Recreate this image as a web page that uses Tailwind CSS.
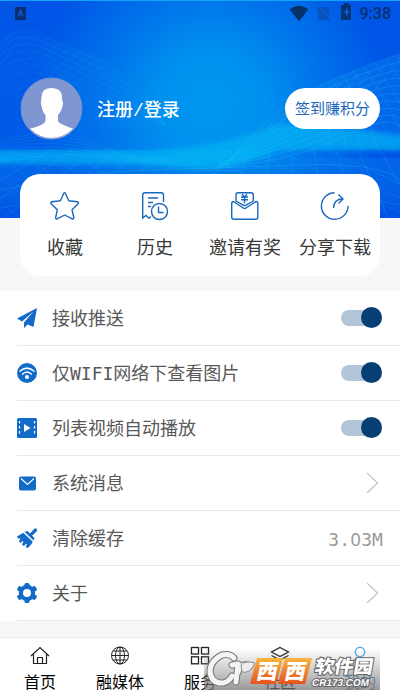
<!DOCTYPE html>
<html lang="zh-CN">
<head>
<meta charset="utf-8">
<title>我的</title>
<script src="https://cdn.jsdelivr.net/npm/@tailwindcss/browser@4"></script>
</head>
<body class="w-[400px] h-[700px] overflow-hidden bg-[#f7f7f7] font-['Liberation_Mono','Noto_Sans_CJK_SC',monospace]">
<div class="relative flex flex-col w-[400px] h-[700px]">
  <!-- header backdrop -->
  <svg class="absolute left-0 top-0" width="400" height="218" viewBox="0 0 400 218">
    <defs>
      <radialGradient id="bg" gradientUnits="userSpaceOnUse" cx="211" cy="104" r="178">
        <stop offset="0" stop-color="#0098ee"/><stop offset=".3" stop-color="#0090ee"/><stop offset=".65" stop-color="#0070ea"/><stop offset="1" stop-color="#0055e6"/>
      </radialGradient>
      <linearGradient id="low" x1="0" x2="0" y1="0" y2="1">
        <stop offset="0" stop-color="#0a85ee" stop-opacity=".3"/><stop offset="1" stop-color="#004fe2" stop-opacity=".8"/>
      </linearGradient>
      <filter id="soft"><feGaussianBlur stdDeviation="2.5"/></filter>
    </defs>
    <rect width="400" height="218" fill="url(#bg)"/>
    <path d="M0 42Q20 22 48 38L100 60Q140 82 165 125L190 155H0Z" fill="#0a88f0" opacity=".12"/>
    <path d="M260 142Q285 105 325 83Q365 66 400 54V150H230Z" fill="#0a98f0" opacity=".28"/>
    <rect y="158" width="400" height="60" fill="url(#low)"/>
    <path filter="url(#soft)" d="M-5 151H150L215 143Q260 134 275 124Q330 126 405 136V150H280Q230 172 180 168T80 164T-5 164Z" fill="#00b4f4" opacity=".65"/>
    <path d="M0 150H270L235 166Q180 170 120 160Q50 152 0 164Z" fill="#00c0f8" opacity=".2"/>
    <g id="mesh" fill="none" stroke="#25c8fa" stroke-width=".8"></g>
    <rect width="400" height="1" fill="#12a4f5"/>
  </svg>

  <!-- status bar -->
  <div class="relative flex h-[27px] items-center pl-[15px] pr-[9px]">
    <svg width="12" height="13" viewBox="0 0 12 13"><rect width="11" height="13" rx="1" fill="#0a2e70"/><path d="M3 9.5L5.5 3L8 9.5M4 7.5H7" fill="none" stroke="#0b58d2" stroke-width="1.3"/></svg>
    <svg class="ml-[262px]" width="20" height="17" viewBox="0 0 20 17"><path d="M.5 4.3Q10-2.800 19.500 4.300L10 16.300Z" fill="#063068"/></svg>
    <svg class="ml-[7px]" width="16" height="17" viewBox="0 0 16 17"><path d="M6 2H13V15H2V6Z" fill="#0b53bd"/><path d="M1 1L14 16" stroke="#0662d8" stroke-width="2.5"/><path d="M.5 2L13.500 16" stroke="#0a48a5" stroke-width="1.100"/></svg>
    <svg class="ml-[9px] -mt-1" width="11" height="17" viewBox="0 0 11 17"><path d="M0 2H3V0H8V2H11V17H0Z" fill="#083273"/><path d="M6.500 4L3 9.500H5V14L8.500 8H6.300Z" fill="#0b60dc"/></svg>
    <span class="ml-[8px] font-['Roboto',sans-serif] text-[16px] leading-4 font-medium text-[#07306f]">9:38</span>
  </div>

  <!-- profile -->
  <div class="relative flex h-[147px] pl-[20px] pr-[20px]">
    <svg class="mt-[50px]" width="63" height="63" viewBox="0 0 63 63">
      <defs><clipPath id="av"><circle cx="31.5" cy="31.5" r="29.5"/></clipPath></defs>
      <circle cx="31.5" cy="31.5" r="30.5" fill="#7f96d0" stroke="#6c94d8"/>
      <g clip-path="url(#av)" fill="#fff"><path d="M21.500 23Q20 11 32 11Q43 11 42 23Q44 25 42 31Q40.500 36 38 38V44Q39 47 54 52V63H9V52Q25 48 25.500 44V38Q23 36 22 31Q20 25 21.500 23Z"/></g>
      <path d="M10 53Q31 69 53 53Q45 62 31.500 62T10 53Z" fill="#9aa6cf"/>
    </svg>
    <div class="ml-[14px] mt-[72px] text-[18px] leading-6 font-medium text-white">注册/登录</div>
    <div class="ml-auto mt-[61px] flex h-[41px] w-[95px] items-center justify-center rounded-full bg-white pt-[3px] text-[15px] leading-none text-[#1766bd]">签到赚积分</div>
  </div>

  <!-- shortcuts -->
  <div class="relative mx-[20px] grid h-[102px] grid-cols-4 rounded-[20px] bg-white text-[18px] leading-6 text-[#383838]">
    <div class="flex flex-col items-center pt-[17px]">
      <svg width="30" height="30" viewBox="0 0 30 30" fill="none" stroke="#1768bc" stroke-width="1.4" stroke-linejoin="round"><path d="M13.700 2.500Q14.600 .8 15.500 2.500L18.800 9.800L27.200 10.800Q29.300 11.300 28 12.900L22 18.700L23.800 26.500Q23.900 28.400 22.200 27.800L14.700 24L7.200 27.800Q5.500 28.400 5.700 26.500L7.300 18.700L1.300 12.900Q0 11.300 2 10.800L10.400 9.800Z"/></svg>
      <span class="mt-[16px] whitespace-nowrap">收藏</span>
    </div>
    <div class="flex flex-col items-center pt-[17px]">
      <svg width="30" height="30" viewBox="0 0 30 30" fill="none" stroke="#1768bc" stroke-width="1.4"><path d="M23.500 11V4Q23.500 1.700 21.200 1.700H5Q2.700 1.700 2.700 4V27L6 24.500L9 27.200L11 25.500M8 7H18M8 11.500H13M8 15.500H11"/><circle cx="19.500" cy="20.500" r="8"/><path d="M18.500 15.500V21.500H23.500"/></svg>
      <span class="mt-[16px] whitespace-nowrap">历史</span>
    </div>
    <div class="flex flex-col items-center pt-[17px]">
      <svg width="30" height="30" viewBox="0 0 30 30" fill="none" stroke="#1768bc" stroke-width="1.4" stroke-linejoin="round"><path d="M6 10V4Q6 1.700 8 1.700H21Q23.300 1.700 23.300 4V10L16 14.200Q14.700 15 13.300 14.200ZM3.500 10.500Q1.700 10.500 1.700 12.500V26Q1.700 28.300 4 28.300H25.500Q27.800 28.300 27.800 26V12.500Q27.800 10.500 26 10.500L16 17Q14.700 18 13.300 17Z"/><path d="M12 3.300L14.500 6L17 3.300M11 6H18M11 8.700H18M14.500 5.500V12.300"/></svg>
      <span class="mt-[16px] whitespace-nowrap">邀请有奖</span>
    </div>
    <div class="flex flex-col items-center pt-[17px]">
      <svg width="30" height="30" viewBox="0 0 30 30" fill="none" stroke="#1768bc" stroke-width="1.4"><path d="M14.500 1.700A13.300 13.300 0 1 0 28 15M13.500 17Q14 8 22.500 8M18.500 3.500L23 8L18.500 12.500"/></svg>
      <span class="mt-[16px] whitespace-nowrap">分享下载</span>
    </div>
  </div>

  <!-- settings -->
  <div class="mt-[15px] flex flex-col bg-white pl-[17px] text-[18px] leading-6 text-[#585858]">
    <div class="flex h-[55px] items-center border-b border-[#e9e9e9] pr-[18px]">
      <svg width="20" height="20" viewBox="0 0 20 20" fill="#136bc9"><path d="M20 0L0 10.500L5 13.500L16.500 3.500L7 14.500V20L10.500 16.500L16.500 19Z"/></svg>
      <span class="ml-[15px] pt-[4px]">接收推送</span>
      <span class="ml-auto flex h-[16px] w-[41px] items-center justify-end rounded-full bg-[#b2c5d7]"><i class="-mt-[1px] size-[21px] shrink-0 rounded-full bg-[#073f75]"></i></span>
    </div>
    <div class="flex h-[55px] items-center border-b border-[#e9e9e9] pr-[18px]">
      <svg width="20" height="20" viewBox="0 0 20 20"><circle cx="10" cy="10" r="10" fill="#136bc9"/><g fill="none" stroke="#fff" stroke-width="1.5"><path d="M2.500 8.500Q10 1.800 17.500 8.500M5.200 11.500Q10 6.700 14.800 11.500"/></g><circle cx="10" cy="14" r="2" fill="#fff"/></svg>
      <span class="ml-[15px] pt-[4px]">仅<span class="font-['DejaVu_Sans_Mono',monospace] leading-none">WIFI</span>网络下查看图片</span>
      <span class="ml-auto flex h-[16px] w-[41px] items-center justify-end rounded-full bg-[#b2c5d7]"><i class="-mt-[1px] size-[21px] shrink-0 rounded-full bg-[#073f75]"></i></span>
    </div>
    <div class="flex h-[55px] items-center border-b border-[#e9e9e9] pr-[18px]">
      <svg width="20" height="20" viewBox="0 0 20 20"><rect width="20" height="20" rx="1.500" fill="#136bc9"/><path d="M7 6V14L13.500 10Z" fill="#fff"/><path d="M2.500 3V18M17.500 3V18" stroke="#fff" stroke-width="1.200" stroke-dasharray="2.500 2.500"/></svg>
      <span class="ml-[15px] pt-[4px]">列表视频自动播放</span>
      <span class="ml-auto flex h-[16px] w-[41px] items-center justify-end rounded-full bg-[#b2c5d7]"><i class="-mt-[1px] size-[21px] shrink-0 rounded-full bg-[#073f75]"></i></span>
    </div>
    <div class="flex h-[55px] items-center border-b border-[#e9e9e9] pr-[21px]">
      <svg width="20" height="20" viewBox="0 0 20 20"><rect x="2" y="3.500" width="17" height="14" rx="2" fill="#136bc9"/><path d="M4 5.500L10.500 11.500L17 5.500" fill="none" stroke="#fff" stroke-width="1.200"/></svg>
      <span class="ml-[15px] pt-[4px]">系统消息</span>
      <svg class="ml-auto" width="13" height="22" viewBox="0 0 13 22" fill="none" stroke="#c6c6c6" stroke-width="1.300"><path d="M1 1L11.500 11L1 21"/></svg>
    </div>
    <div class="flex h-[55px] items-center border-b border-[#e9e9e9] pr-[17px]">
      <svg width="20" height="20" viewBox="0 0 20 20" fill="#136bc9"><path d="M7.500 3.800L10.500 3L13 5.500L17 1Q18.500-.4 19.700 1Q20.600 2.500 19.300 3.700L15 7.800L17.500 10L16.500 12.500Z"/><path d="M6.300 4.700L15.800 13.700L14.500 16L11 20L8.500 19L10 16.500L9 15.700L7 18L4.800 16.500L6.500 14L5.500 13L3.700 15L1.700 13.200L3.500 11L2.800 10.300L1.500 11L0 8.500Z"/></svg>
      <span class="ml-[15px] pt-[4px]">清除缓存</span>
      <span class="ml-auto pt-[3px] text-[18px] tracking-[.1px] text-[#999] font-['DejaVu_Sans_Mono',monospace]">3.<span class="inline-block w-[11px] text-center font-['Noto_Sans',sans-serif] leading-none">0</span>3M</span>
    </div>
    <div class="flex h-[55px] items-center border-b border-[#e9e9e9] pr-[21px]">
      <svg width="20" height="20" viewBox="0 0 20 20"><g fill="#136bc9"><circle cx="10" cy="10" r="8.200"/><rect x="7.500" y="0" width="5" height="20" rx="1.500"/><rect x="7.500" y="-.5" width="5" height="21" rx="1.500" transform="rotate(60 10 10)"/><rect x="7.500" y="-.5" width="5" height="21" rx="1.500" transform="rotate(120 10 10)"/></g><circle cx="10" cy="10" r="4" fill="#fff"/></svg>
      <span class="ml-[15px] pt-[4px]">关于</span>
      <svg class="ml-auto" width="13" height="22" viewBox="0 0 13 22" fill="none" stroke="#c6c6c6" stroke-width="1.300"><path d="M1 1L11.500 11L1 21"/></svg>
    </div>
  </div>

  <!-- tab bar -->
  <div class="mt-[16px] grid flex-1 grid-cols-5 border-t border-[#ececec] bg-white text-[16px] leading-5 text-black">
    <div class="flex flex-col items-center pt-[8px]">
      <svg width="20" height="20" viewBox="0 0 20 20" fill="none" stroke="#222" stroke-width="1.200"><path d="M1 10L10 1.500L19 10M3.500 8V17.500H16.500V8M7.500 17.500V11.500H12.500V17.500"/></svg>
      <span class="mt-[8px]">首页</span>
    </div>
    <div class="flex flex-col items-center pt-[8px]">
      <svg width="20" height="20" viewBox="0 0 20 20" fill="none" stroke="#222" stroke-width="1"><circle cx="10" cy="9.500" r="8.500"/><ellipse cx="10" cy="9.500" rx="4.500" ry="8.500"/><path d="M10 1V18M1.500 9.500H18.500M3 5H17M3 14H17"/></svg>
      <span class="mt-[8px]">融媒体</span>
    </div>
    <div class="flex flex-col items-center pt-[8px]">
      <svg width="20" height="20" viewBox="0 0 20 20" fill="none" stroke="#222" stroke-width="1.300"><rect x="1.500" y="1.500" width="7" height="6.500"/><rect x="11.500" y="1.500" width="7" height="6.500"/><rect x="1.500" y="10.800" width="7" height="7"/><rect x="11.500" y="10.800" width="7" height="7"/></svg>
      <span class="mt-[8px]">服务</span>
    </div>
    <div class="flex flex-col items-center pt-[8px]">
      <svg width="20" height="20" viewBox="0 0 20 20" fill="none" stroke="#222" stroke-width="1.300"><path d="M10 1.500L18.500 6L10 10.500L1.500 6ZM1.500 9.500L10 14L18.500 9.500"/></svg>
      <span class="mt-[8px]">社区</span>
    </div>
    <div class="flex flex-col items-center pt-[8px] text-[#3585c4]">
      <svg width="20" height="20" viewBox="0 0 20 20" fill="none" stroke="#59aae6" stroke-width="1.500"><circle cx="10" cy="6" r="4.700"/><path d="M2 18Q3 12 10 12T18 18"/></svg>
      <span class="mt-[8px]">我的</span>
    </div>
  </div>

  <!-- site badge over the tab bar -->
  <svg class="absolute left-[204px] top-[648px]" width="176" height="42" viewBox="0 0 176 42">
    <defs>
      <linearGradient id="sh" x1="0" x2="0" y1="0" y2="1"><stop offset="0" stop-color="#888" stop-opacity="0"/><stop offset="1" stop-color="#777" stop-opacity=".75"/></linearGradient>
      <linearGradient id="or" x1="0" x2="0" y1="0" y2="1"><stop offset="0" stop-color="#f8b53e"/><stop offset="1" stop-color="#e6531b"/></linearGradient>
    </defs>
    <rect width="176" height="42" fill="url(#sh)"/>
    <g fill="none" stroke-linecap="round" stroke-linejoin="round">
      <path d="M30 10Q26 5 18 7Q6 13 6 24Q8 36 19 35Q25 34 28 28M28 17L34 16L32 34M34 24Q36 14 46 18" stroke="#777" stroke-width="7"/>
      <path d="M30 10Q26 5 18 7Q6 13 6 24Q8 36 19 35Q25 34 28 28M28 17L34 16L32 34M34 24Q36 14 46 18" stroke="#f4f4f4" stroke-width="5"/>
    </g>
    <path d="M37 17Q42 12 51 15Q46 26 38 24Z" fill="#eee" stroke="#777" stroke-width=".8"/>
    <g fill="url(#or)"><path d="M53 10H79L72 36H46Z"/><path d="M81 10H108L101 36H74Z"/></g>
    <g fill="#fff" font-family="'Noto Sans CJK SC',sans-serif" font-weight="900" text-anchor="middle">
      <text transform="translate(62 31) skewX(-12)" font-size="21">西</text>
      <text transform="translate(90 31) skewX(-12)" font-size="21">西</text>
      <g stroke="#666" stroke-width="2" paint-order="stroke">
        <text transform="translate(139 25) skewX(-10)" font-size="18" textLength="58" lengthAdjust="spacingAndGlyphs">软件园</text>
        <text transform="translate(136 38) skewX(-10)" font-family="'Liberation Sans',sans-serif" font-weight="700" font-size="10" textLength="57" lengthAdjust="spacingAndGlyphs">CR173.COM</text>
      </g>
    </g>
  </svg>
</div>
<script>
// Wire-mesh waves on the header backdrop
const mesh = document.getElementById('mesh');
function line(d, o) {
  const p = document.createElementNS('http://www.w3.org/2000/svg', 'path');
  p.setAttribute('d', d);
  p.setAttribute('opacity', o);
  mesh.appendChild(p);
}
for (let i = 0; i < 10; i++) {
  line(`M0 ${42 + i * 7}Q20 ${20 + i * 8} 48 ${38 + i * 6}L${100 - i * 3} ${60 + i * 6}Q${140 - i * 3} ${80 + i * 5} 165 125`, .18 - i * .015);
  line(`M${i * 10 - 15} ${75 + i}Q${i * 11} ${45 + i * 2} ${i * 12 + 10} ${34 + i * 3}`, .14);
  line(`M${230 - i * 2} ${160 + i}Q${275 + i * 3} ${105 + i * 6} ${325 + i * 2} ${83 + i * 6}T400 ${54 + i * 8}`, .3);
  line(`M${310 + i * 11} ${88 - i * 4}Q${330 + i * 12} ${110 - i} ${330 + i * 16} 150`, .25);
  line(`M${400 - i * 14} ${60 + i * 5}L${330 - i * 9} 142`, .2);
  line(`M0 ${142 + i * 2}Q55 ${122 + i * 5} 100 ${145 + i * 2}T200 ${150 + i * 2}T285 ${128 + i * 3}T400 ${134 + i * 2}`, .18);
}
for (let i = 0; i < 16; i++) {
  line(`M${i * 32 - 60} 218L${i * 22 + 50} 150`, .28);
  line(`M${i * 30 + 20} 218L${i * 26 - 60} 150`, .2);
}
line('M0 190Q80 172 150 170T300 165T400 180', .3);
line('M0 208Q100 188 200 185T400 205', .25);
</script>
</body>
</html>
